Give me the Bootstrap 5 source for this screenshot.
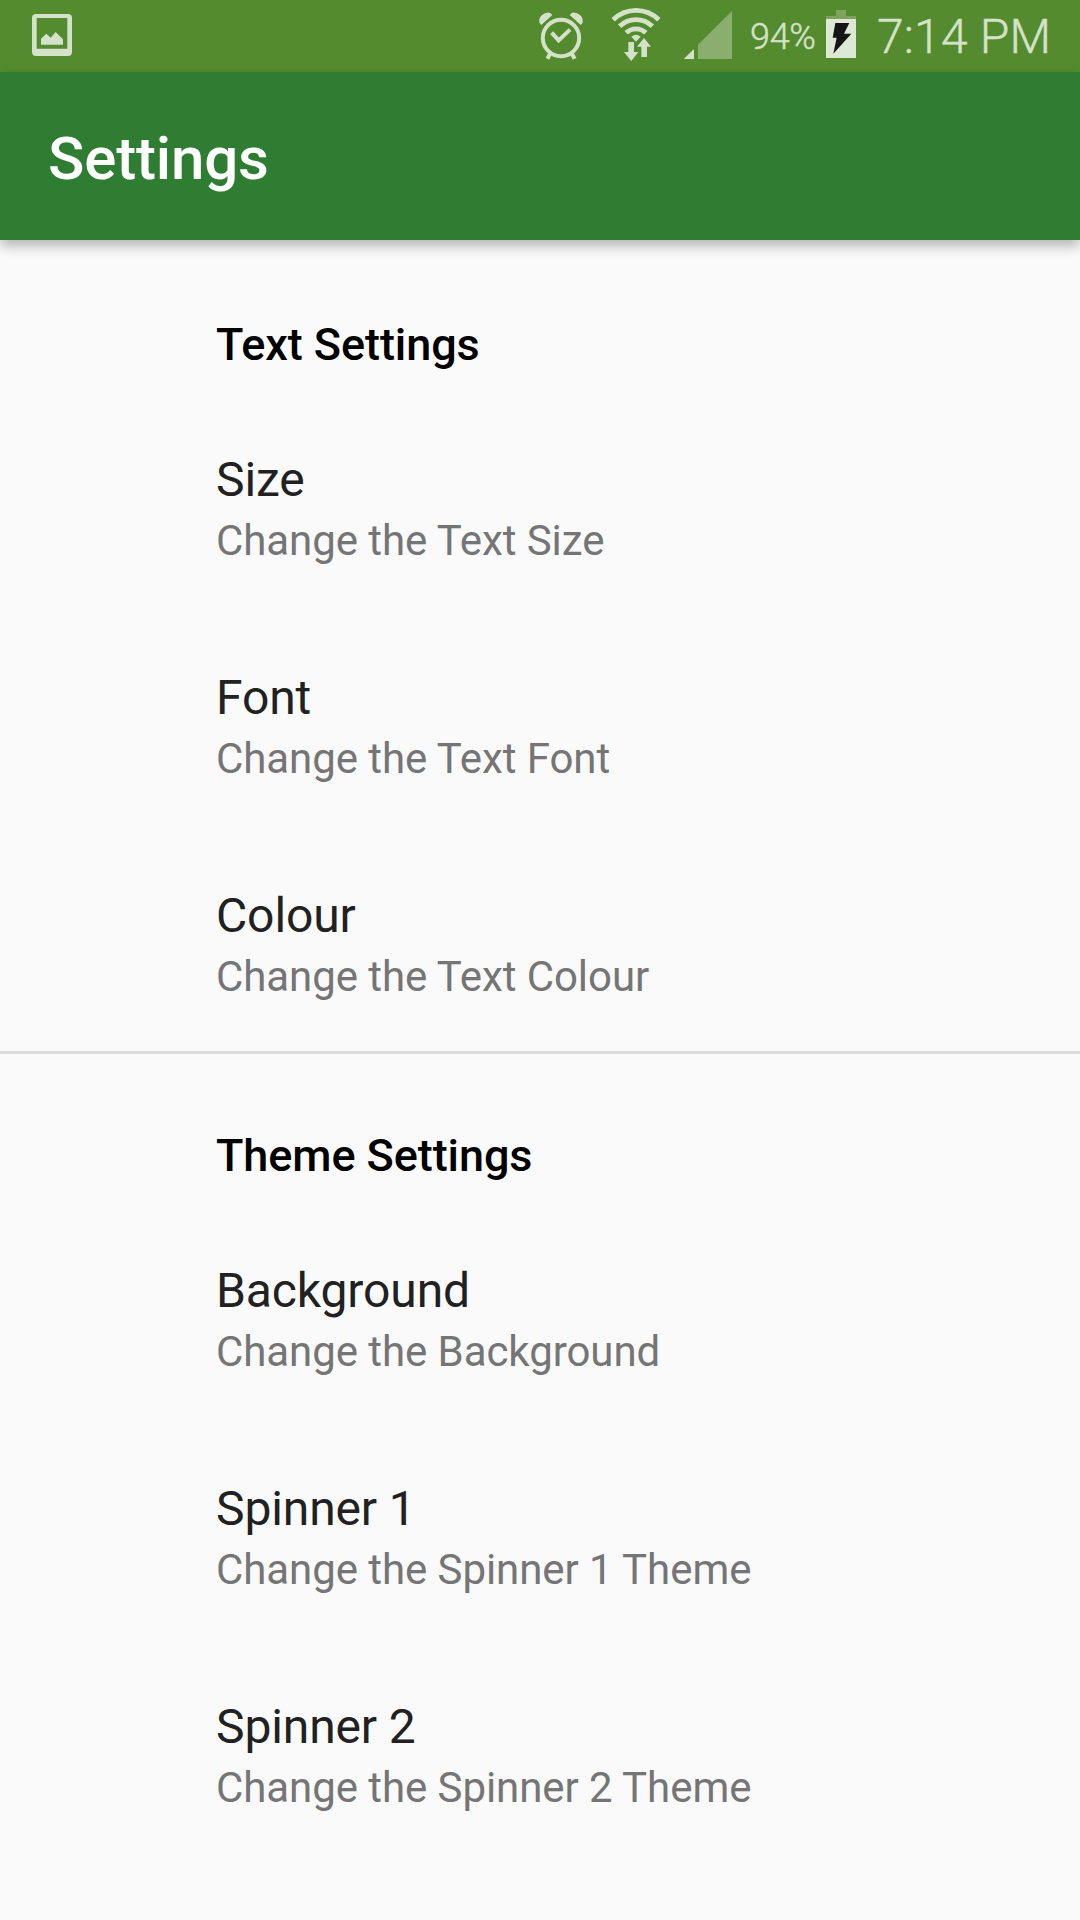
<!DOCTYPE html>
<html lang="en">
<head>
<meta charset="utf-8">
<meta name="viewport" content="width=device-width, initial-scale=1">
<title>Settings</title>
<link href="https://cdn.jsdelivr.net/npm/bootstrap@5.3.0/dist/css/bootstrap.min.css" rel="stylesheet">
<style>
body { font-family: Roboto, sans-serif; background: #fafafa; color: #212121; height: 1920px; overflow: hidden; }
.status-bar { height: 72px; background: #558b2f; color: #d5e2ca; padding: 0 32px; }
.status-bar svg { display: block; flex: none; }
.tint { fill: #d5e2ca; }
.tint-line { stroke: #d5e2ca; fill: none; }
.faded { fill: #8aae6e; }
.battery-level { font-size: 36px; line-height: 42px; font-weight: 300; margin-left: 18px; padding-top: 2px; width: 65px; letter-spacing: -.3px; -webkit-text-stroke: .4px; white-space: nowrap; }
.clock { font-size: 48px; line-height: 56px; font-weight: 300; margin-left: 21px; padding-top: 2px; width: 171px; letter-spacing: .2px; -webkit-text-stroke: .4px; white-space: nowrap; }
.app-bar { height: 168px; background: #2e7d32; padding: 0 48px; box-shadow: 0 6px 12px rgba(0,0,0,.28); z-index: 1; }
.app-title { font-size: 60px; line-height: 70px; font-weight: 500; letter-spacing: -.15px; color: #fff; margin: 5px 0 0; }
.pref-group { border-top: 3px solid #dcdcdc; padding-left: 216px; }
.pref-group:first-child { border-color: transparent; }
.pref-heading { height: 154px; padding-top: 76px; font-size: 45px; line-height: 52px; font-weight: 500; letter-spacing: -.08px; color: #000; margin: 0; }
.pref-item { height: 218px; padding-top: 55px; }
.pref-name { font-size: 48px; line-height: 56px; letter-spacing: -.12px; margin-bottom: 8px; }
.pref-note { font-size: 42px; line-height: 50px; letter-spacing: -.07px; color: #757575; }
</style>
<script src="https://cdn.jsdelivr.net/npm/bootstrap@5.3.0/dist/js/bootstrap.bundle.min.js"></script>
</head>
<body>
<div class="status-bar d-flex align-items-center">
  <svg width="40" height="72" viewBox="96 0 120 216" aria-label="Screenshot saved">
    <path class="tint" fill-rule="evenodd" d="M108 42H204Q216 42 216 54V156Q216 168 204 168H108Q96 168 96 156V54Q96 42 108 42ZM110 54V146H202V54Z"/>
    <path class="tint" d="M123 134V116L139 101L152 113L167 96L189 118V134Z"/>
  </svg>
  <div class="d-flex align-items-center ms-auto">
    <svg width="46" height="72" viewBox="54 0 138 216" aria-label="Alarm">
      <circle class="tint-line" cx="123" cy="114" r="54.500" stroke-width="12"/>
      <path class="tint-line" stroke-width="12" d="M95 98L116 121L150 89M91 160L82 176M155 160L164 176"/>
      <path class="tint" d="M64 75L58 68Q56 54 66 45Q78 35 90 38L97 45ZM182 75L188 68Q190 54 180 45Q168 35 156 38L149 45Z"/>
    </svg>
    <svg width="57" height="72" viewBox="261 0 171 216" style="margin-left:23px" aria-label="Wi-Fi">
      <g class="tint-line" stroke-width="14.500">
        <path d="M279.500 59.500A97 97 0 0 1 416.500 59.500"/>
        <path d="M299 79A69.500 69.500 0 0 1 397 79"/>
        <path d="M318.500 98.500A42 42 0 0 1 377.500 98.500"/>
      </g>
      <path class="tint" d="M334 110Q348 98 362 110L348 125Z"/>
      <path class="tint" d="M325 126H342V156H355L334 183L312 156H325ZM364 171V140H351L372 114L393 140H381V171Z"/>
    </svg>
    <svg width="49" height="72" viewBox="489 0 147 216" style="margin-left:19px" aria-label="Signal">
      <path class="tint" d="M491 177L522 147V177Z"/>
      <path class="faded" d="M534 177V134L636 33V177Z"/>
    </svg>
    <div class="battery-level">94%</div>
    <svg width="30" height="72" viewBox="258 0 90 216" style="margin-left:11px" aria-label="Charging">
      <path fill="#7da35e" d="M288 30H318V48H348V57H258V48H288Z"/>
      <path fill="#dde8d5" d="M258 57H348V174H258Z"/>
      <path fill="#151515" d="M286 69H328L312 101H334L280 161L290 113H278Z"/>
    </svg>
    <div class="clock">7:14 PM</div>
  </div>
</div>
<header class="app-bar position-relative d-flex align-items-center"><h1 class="app-title">Settings</h1></header>
<main>
  <section class="pref-group">
    <h2 class="pref-heading">Text Settings</h2>
    <div class="pref-item"><div class="pref-name">Size</div><div class="pref-note">Change the Text Size</div></div>
    <div class="pref-item"><div class="pref-name">Font</div><div class="pref-note">Change the Text Font</div></div>
    <div class="pref-item"><div class="pref-name">Colour</div><div class="pref-note">Change the Text Colour</div></div>
  </section>
  <section class="pref-group">
    <h2 class="pref-heading">Theme Settings</h2>
    <div class="pref-item"><div class="pref-name">Background</div><div class="pref-note">Change the Background</div></div>
    <div class="pref-item"><div class="pref-name">Spinner 1</div><div class="pref-note">Change the Spinner 1 Theme</div></div>
    <div class="pref-item"><div class="pref-name">Spinner 2</div><div class="pref-note">Change the Spinner 2 Theme</div></div>
  </section>
</main>
</body>
</html>
